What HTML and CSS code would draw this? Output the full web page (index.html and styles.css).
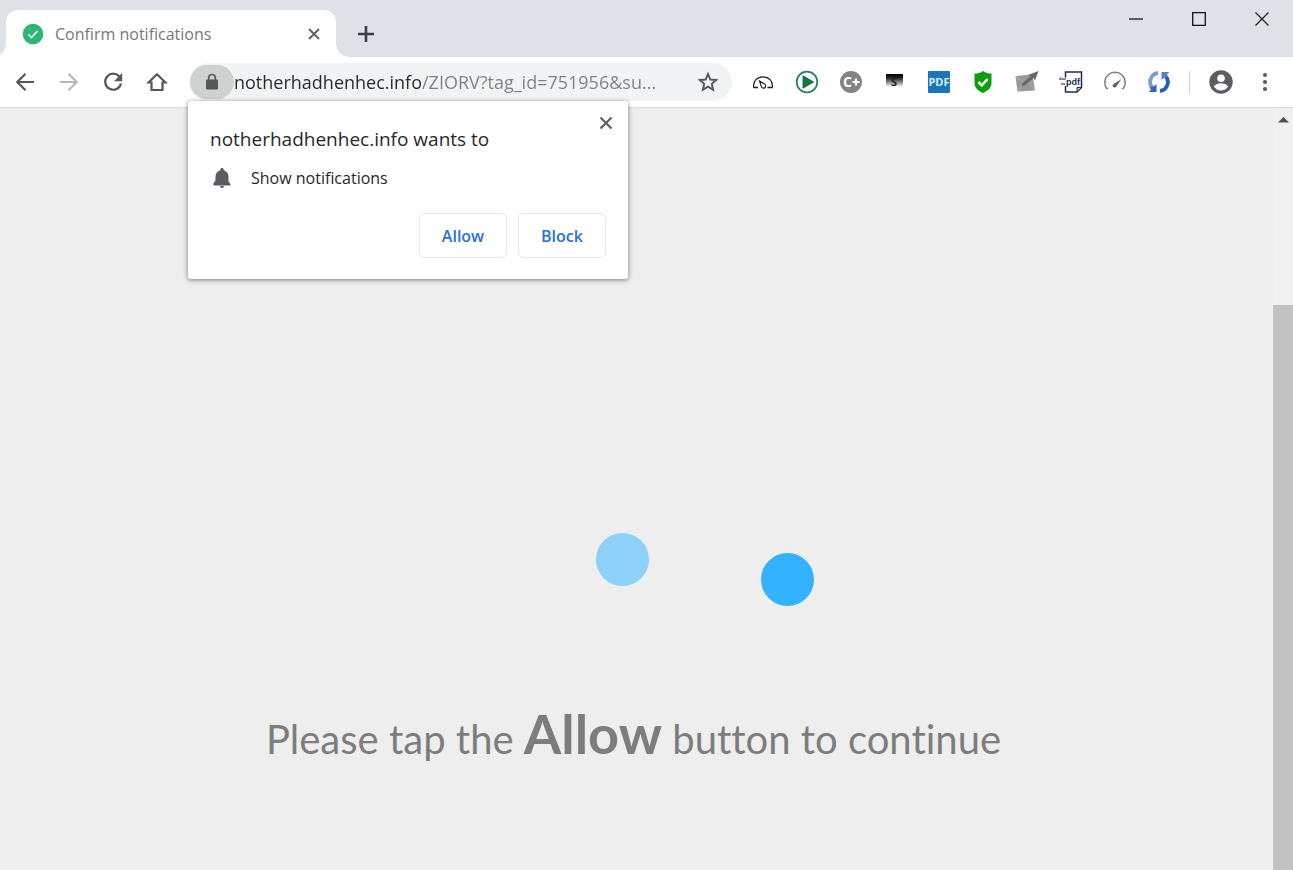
FILE: index.html
```html
<!DOCTYPE html>
<html lang="en">
<head>
    <meta charset="UTF-8">
    <meta name="viewport" content="width=device-width, initial-scale=1.0">
    <title>Confirm notifications</title>
    <link rel="stylesheet" href="styles.css">
</head>
<body>

<header class="titlebar">
    <div class="tab">
        <svg class="tab-icon" width="22" height="22" viewBox="0 0 22 22">
            <circle cx="11" cy="11" r="10.3" fill="#2bb673"/>
            <path d="M6.5 11.5l3 3 6-6.500" fill="none" stroke="#fff" stroke-width="1.600"/>
        </svg>
        <span class="tab-title">Confirm notifications</span>
        <button class="tab-close" type="button" aria-label="Close tab">
            <svg width="12" height="12" viewBox="0 0 12 12"><path d="M1 1l10 10M11 1L1 11" stroke="#5f6368" stroke-width="2"/></svg>
        </button>
    </div>
    <button class="new-tab" type="button" aria-label="New tab">
        <svg width="18" height="18" viewBox="0 0 18 18"><path d="M9 1v16M1 9h16" stroke="#3c4043" stroke-width="2.600"/></svg>
    </button>
    <div class="window-controls">
        <button type="button" aria-label="Minimize">
            <svg width="14" height="14" viewBox="0 0 14 14"><path d="M0 7h14" stroke="#222" stroke-width="1.400"/></svg>
        </button>
        <button type="button" aria-label="Maximize">
            <svg width="14" height="14" viewBox="0 0 14 14"><path d="M.7.7h12.600v12.600H.7z" fill="none" stroke="#111" stroke-width="1.300"/></svg>
        </button>
        <button type="button" aria-label="Close window">
            <svg width="14" height="14" viewBox="0 0 14 14"><path d="M.5.5l13 13M13.500.5l-13 13" stroke="#222" stroke-width="1.300"/></svg>
        </button>
    </div>
</header>

<div class="toolbar">
    <button class="tool" type="button" aria-label="Back">
        <svg width="22" height="22" viewBox="0 0 22 22"><path d="M20 11H3.500M11.500 2.800L3.300 11l8.200 8.200" fill="none" stroke="#54585c" stroke-width="2.200"/></svg>
    </button>
    <button class="tool" type="button" aria-label="Forward">
        <svg width="22" height="22" viewBox="0 0 22 22"><path d="M2 11h16.500M10.500 2.800l8.200 8.200-8.200 8.200" fill="none" stroke="#b6b8ba" stroke-width="2.200"/></svg>
    </button>
    <button class="tool" type="button" aria-label="Reload">
        <svg width="22" height="22" viewBox="0 0 22 22"><path d="M17.800 6.200A8 8 0 1 0 19 12.500" fill="none" stroke="#54585c" stroke-width="2.200"/><path d="M20.200 2v8.200H12z" fill="#54585c"/></svg>
    </button>
    <button class="tool" type="button" aria-label="Home">
        <svg width="22" height="22" viewBox="0 0 22 22"><path d="M2.500 11.500L11 3.200l8.500 8.300h-3v7.500h-11v-7.500z" fill="none" stroke="#54585c" stroke-width="2.200"/></svg>
    </button>

    <div class="omnibox">
        <button class="site-info" type="button" aria-label="Site information">
            <svg width="14" height="18" viewBox="0 0 14 18"><path d="M3.700 8V4.800a3.300 3.300 0 0 1 6.600 0V8" fill="none" stroke="#54585c" stroke-width="1.700"/><rect x="1" y="6.500" width="12" height="10" rx="1.300" fill="#54585c"/></svg>
        </button>
        <input class="url" type="text" aria-label="Address" value="notherhadhenhec.info/ZIORV?tag_id=751956&amp;su...">
        <button class="star" type="button" aria-label="Bookmark this page">
            <svg width="22" height="22" viewBox="0 0 22 22"><path d="M11 3l2.300 5.500 6 .5-4.500 3.900 1.300 5.800L11 15.600l-5.100 3.100 1.300-5.800L2.700 9l6-.5z" fill="none" stroke="#54585c" stroke-width="1.900"/></svg>
        </button>
    </div>

    <div class="extensions">
        <button class="tool" type="button" aria-label="Page speed">
            <svg width="22" height="22" viewBox="0 0 22 22"><path d="M6 16.500H1.800C.6 9.800 5.500 5.800 11 5.800s10.400 4 9.200 10.700h-4.700" fill="none" stroke="#222" stroke-width="1.300"/><path d="M7.500 10l5 3a2.200 2.200 0 1 1-3.200 2.400z" fill="#fff" stroke="#222" stroke-width="1.200"/></svg>
        </button>
        <button class="tool" type="button" aria-label="Play">
            <svg width="24" height="24" viewBox="0 0 24 24"><circle cx="12" cy="12" r="10.300" fill="#fff" stroke="#2b8060" stroke-width="1.800"/><path d="M8 5.800L18.600 12 8 18.200z" fill="#0b7a3e" stroke="#075c3c" stroke-width=".8"/></svg>
        </button>
        <button class="tool" type="button" aria-label="C plus">
            <svg width="24" height="24" viewBox="0 0 24 24"><circle cx="12" cy="12" r="11" fill="#848484"/><text x="4" y="17" class="c-plus">C</text><path d="M17 8.500v7M13.500 12h7" stroke="#fff" stroke-width="2"/></svg>
        </button>
        <button class="tool" type="button" aria-label="S extension">
            <svg width="18" height="18" viewBox="0 0 18 18"><defs><linearGradient id="fade" x2="0" y2="1"><stop offset="0" stop-color="#000"/><stop offset=".3" stop-color="#222"/><stop offset="1" stop-color="#fff"/></linearGradient></defs><path d="M0 1h17v13H0z" fill="url(#fade)"/><text x="5" y="13" class="s-mark">S</text></svg>
        </button>
        <button class="tool" type="button" aria-label="PDF">
            <svg width="24" height="24" viewBox="0 0 24 24"><rect x="1" y="1" width="22" height="22" rx="1" fill="#1b76b8"/><text x="12" y="16" class="pdf-mark">PDF</text></svg>
        </button>
        <button class="tool" type="button" aria-label="Shield">
            <svg width="22" height="22" viewBox="0 0 22 22"><path d="M11 0c2.500 2 5.500 2.500 8.500 2.500V12c0 5-4 8-8.500 10-4.500-2-8.500-5-8.500-10V2.500C5.500 2.500 8.500 2 11 0z" fill="#0a9e10"/><path d="M6.500 11l3.300 3.300L15.500 8" fill="none" stroke="#fff" stroke-width="2.600"/></svg>
        </button>
        <button class="tool" type="button" aria-label="Mail">
            <svg width="24" height="24" viewBox="0 0 24 24"><path d="M.5 6l17-1.500 2.500 16L2.500 21.500z" fill="#999"/><path d="M.5 6l9.500 8 7.500-9.500M2.500 21.500l6-9M20 20.500l-7-9" fill="none" stroke="#bdbdbd" stroke-width=".8"/><path d="M23.500 1L13 5l2.500 1.200L6.500 14l.5 2.200 2.500-.7 9-7.500 1.500 2.500z" fill="#686868"/></svg>
        </button>
        <button class="tool" type="button" aria-label="Doc to PDF">
            <svg width="24" height="24" viewBox="0 0 24 24"><path d="M6.500 7.500V2h16v15.500L18 22H6.500v-6" fill="#fff" stroke="#242b50" stroke-width="1.500"/><path d="M22.500 17.500H18V22z" fill="#b9bdd0" stroke="#242b50"/><text x="7" y="15" class="doc-big">pdf</text><text x="0" y="10" class="doc-small">doc</text><text x="2" y="15" class="doc-small">to</text></svg>
        </button>
        <button class="tool" type="button" aria-label="Speed test">
            <svg width="24" height="24" viewBox="0 0 24 24"><path d="M4 19A10.300 10.300 0 1 1 20 19" fill="none" stroke="#777" stroke-width="1.300"/><path d="M4 19l1.500-1M1.500 12h2M12 2v2M22.500 12h-2M20 19l-1.500-1M4.500 5l1.500 1.500" stroke="#888"/><path d="M18.500 9l-5 7.200a2 2 0 1 1-2.700-2.500z" fill="#666"/></svg>
        </button>
        <button class="tool" type="button" aria-label="Sync">
            <svg width="24" height="24" viewBox="0 0 24 24"><path d="M11 3A9 9 0 0 0 5.500 18" fill="none" stroke="#829bc9" stroke-width="3.800"/><path d="M9.500 14v8H1.500l2.500-2.300L2.500 17l4-.5z" fill="#3568ba"/><path d="M13 21A9 9 0 0 0 18.500 6" fill="none" stroke="#275db7" stroke-width="3.800"/><path d="M14.500 10V2h8L20 4.300 21.500 7l-4 .5z" fill="#5c80bf"/></svg>
        </button>
    </div>
    <span class="divider"></span>
    <button class="tool" type="button" aria-label="Profile">
        <svg width="26" height="26" viewBox="0 0 26 26"><circle cx="13" cy="13" r="11.700" fill="#5a5d62"/><circle cx="13" cy="9.200" r="3.800" fill="#fff"/><path d="M5.800 17.600c1.600-2.400 4.600-3.300 7.200-3.300s5.600.9 7.200 3.300a8.700 8.700 0 0 1-14.400 0z" fill="#fff"/></svg>
    </button>
    <button class="tool" type="button" aria-label="Menu">
        <svg width="6" height="20" viewBox="0 0 6 20"><g fill="#5a5d62"><circle cx="3" cy="3" r="2.100"/><circle cx="3" cy="10" r="2.100"/><circle cx="3" cy="17" r="2.100"/></g></svg>
    </button>

    <!-- permission prompt hanging under the address bar -->
    <div class="prompt" role="dialog" aria-labelledby="prompt-title">
        <button class="prompt-close" type="button" aria-label="Close">
            <svg width="14" height="14" viewBox="0 0 14 14"><path d="M1.500 1.500l11 11M12.500 1.500l-11 11" stroke="#5f6368" stroke-width="2.300"/></svg>
        </button>
        <h2 class="prompt-title" id="prompt-title">notherhadhenhec.info wants to</h2>
        <div class="prompt-item">
            <svg width="24" height="22" viewBox="0 0 24 22"><path d="M12 1c1 0 1.700.7 1.700 1.700v.5c3 .8 4.800 3.300 4.800 6.300v5l2 2.500v1.500h-17V16l2-2.500v-4c0-3 1.800-5.500 4.800-6.300v-.5C10.300 1.700 11 1 12 1z" fill="#5a5d62"/><path d="M10 19h4a2 2 0 0 1-4 0z" fill="#5a5d62"/></svg>
            <span>Show notifications</span>
        </div>
        <div class="prompt-actions">
            <button class="prompt-button" type="button">Allow</button>
            <button class="prompt-button" type="button">Block</button>
        </div>
    </div>
</div>

<div class="viewport">
    <main class="page">
        <div class="loader">
            <span class="dot dot-light"></span>
            <span class="dot dot-strong"></span>
        </div>
        <p class="message">Please tap the <strong>Allow</strong> button to continue</p>
    </main>
    <div class="scrollbar">
        <svg class="scroll-up" width="20" height="24" viewBox="0 0 20 24"><path d="M5 14.500L10.500 9l5.500 5.500z" fill="#505050"/></svg>
        <div class="scroll-thumb"></div>
    </div>
</div>

</body>
</html>
```
FILE: styles.css
```css
* {
    box-sizing: border-box;
}
body {
    margin: 0;
    min-height: 100vh;
    display: flex;
    flex-direction: column;
    font-family: "Open Sans", "Noto Sans", sans-serif;
    color: #26282b;
    background-color: #eee;
}
button {
    display: flex;
    align-items: center;
    justify-content: center;
    padding: 0;
    border: none;
    background: none;
    font-family: inherit;
    cursor: pointer;
}

/* tab strip */
.titlebar {
    display: flex;
    height: 57px;
    padding: 10px 0 0 6px;
    background-color: #dee1e6;
}
.tab {
    position: relative;
    display: flex;
    align-items: center;
    width: 330px;
    padding: 0 16px;
    border-radius: 12px 12px 0 0;
    background-color: #fff;
}
.tab::before, .tab::after {
    content: "";
    position: absolute;
    bottom: 0;
    width: 12px;
    height: 12px;
}
.tab::before {
    right: 100%;
    background: radial-gradient(circle at 0 0, #dee1e6 11px, #fff 12px);
}
.tab::after {
    left: 100%;
    background: radial-gradient(circle at 100% 0, #dee1e6 11px, #fff 12px);
}
.tab-title {
    flex: 1;
    padding-left: 11px;
    font-size: 16px;
    line-height: 24px;
    color: #75787b;
}
.tab-close {
    width: 12px;
    height: 24px;
}
.new-tab {
    width: 60px;
}
.window-controls {
    display: flex;
    align-items: center;
    height: 38px;
    margin: -10px 0 0 auto;
}
.window-controls button {
    width: 63px;
    height: 38px;
}

/* toolbar */
.toolbar {
    position: relative;
    display: flex;
    align-items: center;
    height: 51px;
    padding: 0 6px 0 3px;
    border-bottom: 1px solid #dcdcdc;
    background-color: #fff;
}
.tool {
    flex: none;
    width: 44px;
    height: 44px;
}
.omnibox {
    display: flex;
    flex: 1;
    align-items: center;
    min-width: 0;
    height: 38px;
    margin: 0 9px 0 10px;
    padding: 0 2px 0 1px;
    border-radius: 19px;
    background-color: #f1f3f4;
}
.site-info {
    flex: none;
    width: 44px;
    height: 34px;
    border-radius: 17px;
    background-color: #cfd1d1;
}
/* host is dark, the rest of the address is grey */
.url {
    flex: 1;
    min-width: 0;
    padding: 0;
    border: none;
    outline: none;
    font-family: inherit;
    font-size: 18px;
    line-height: 28px;
    color: #7c8084;
    background: linear-gradient(to right, #26282b 187px, #7c8084 187px);
    -webkit-background-clip: text;
    background-clip: text;
    -webkit-text-fill-color: transparent;
}
.star {
    width: 44px;
    height: 34px;
}
.extensions {
    display: flex;
}
.divider {
    width: 1px;
    height: 22px;
    margin: 0 9px 0 8px;
    background-color: #cfd1d4;
}
.c-plus {
    font: bold 14px "Open Sans", sans-serif;
    fill: #fff;
}
.s-mark {
    font: bold 11px "Open Sans", sans-serif;
    fill: #222;
}
.pdf-mark {
    font: bold 11px "Open Sans", sans-serif;
    text-anchor: middle;
    fill: #d8effb;
}
.doc-big {
    font: bold 9px "Liberation Sans", sans-serif;
    fill: #242b50;
}
.doc-small {
    font: bold 4px "Open Sans", sans-serif;
    fill: #242b50;
}

/* permission prompt */
.prompt {
    position: absolute;
    z-index: 1;
    top: 44px;
    left: 188px;
    width: 440px;
    padding: 24px 22px 21px;
    border-radius: 3px;
    background-color: #fff;
    box-shadow: 0 1px 5px rgba(0, 0, 0, 0.5);
}
.prompt-close {
    position: absolute;
    top: 12px;
    right: 12px;
    width: 20px;
    height: 20px;
}
.prompt-title {
    margin: 0;
    font-size: 19px;
    font-weight: 400;
    line-height: 28px;
}
.prompt-item {
    display: flex;
    align-items: center;
    gap: 17px;
    margin-top: 13px;
    font-size: 16px;
    line-height: 24px;
}
.prompt-actions {
    display: flex;
    justify-content: flex-end;
    gap: 11px;
    margin-top: 23px;
}
.prompt-button {
    width: 88px;
    height: 45px;
    border: 1px solid #e6e8eb;
    border-radius: 5px;
    font-size: 16px;
    font-weight: 600;
    color: #2b6fd8;
}

/* page content */
.viewport {
    display: flex;
    flex: 1;
}
.page {
    display: flex;
    flex: 1;
    flex-direction: column;
    align-items: center;
    padding: 425px 6px 0 0;
}
.loader {
    display: flex;
    justify-content: flex-end;
    gap: 112px;
    width: 360px;
}
.dot {
    width: 53px;
    height: 53px;
    border-radius: 50%;
}
.dot-light {
    background-color: #8dd1fa;
}
.dot-strong {
    margin-top: 20px;
    background-color: #33b2ff;
}
.message {
    margin: 92px 0 0;
    font-family: Lato, "Open Sans", sans-serif;
    font-size: 40px;
    font-variant-ligatures: none;
    line-height: 72px;
    color: #7d7d7d;
}
.message strong {
    font-size: 54px;
}

/* scrollbar */
.scrollbar {
    display: flex;
    flex-direction: column;
    width: 20px;
    background-color: #f0f0f0;
}
.scroll-thumb {
    flex: 1;
    margin-top: 173px;
    background-color: #c1c1c1;
}
```
